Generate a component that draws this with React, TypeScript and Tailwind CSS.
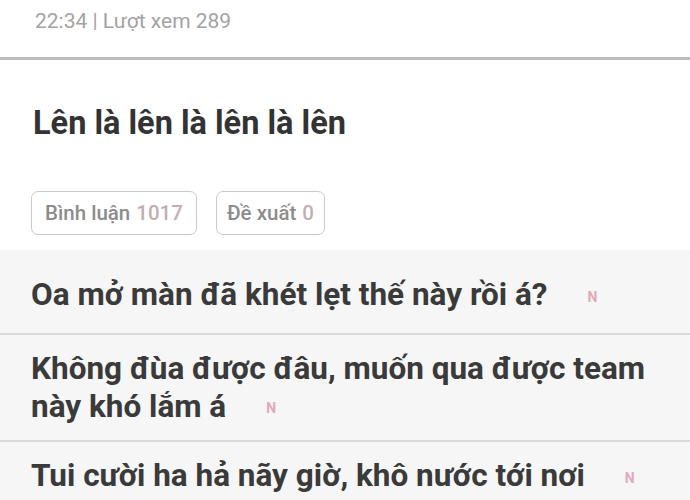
import React from 'react';

const comments = [
  { id: 1, text: 'Oa mở màn đã khét lẹt thế này rồi á?' },
  { id: 2, text: 'Không đùa được đâu, muốn qua được team này khó lắm á' },
  { id: 3, text: 'Tui cười ha hả nãy giờ, khô nước tới nơi' },
];

export default function App() {
  return (
    <div className="w-[690px] h-[500px] overflow-hidden bg-white font-['Roboto','Noto_Sans',sans-serif]">
      {/* Post meta */}
      <div className="h-[57px] px-[35px] pt-[8px] text-[21px] leading-[26px] text-[#a3a3a3]">
        22:34 | Lượt xem 289
      </div>
      <div className="h-[3px] bg-[#bdbdbd]" />

      {/* Title */}
      <div className="px-[33px] pt-[44px]">
        <h1 className="text-[32.5px] leading-[38px] font-bold text-[#333333]">Lên là lên là lên là lên</h1>
      </div>

      {/* Tabs */}
      <div className="flex gap-[19px] px-[31px] pt-[49px] pb-[15px]">
        <div className="h-[44px] px-[13px] flex items-center rounded-[7px] border border-[#c9c9c9] text-[20.5px] font-medium text-[#8c8c8c]">
          Bình luận <span className="ml-[6px] text-[#c3adb2]">1017</span>
        </div>
        <div className="h-[44px] px-[10px] flex items-center rounded-[7px] border border-[#c9c9c9] text-[20.5px] font-medium text-[#8c8c8c]">
          Đề xuất <span className="ml-[6px] text-[#c3adb2]">0</span>
        </div>
      </div>

      {/* Comment list */}
      <div className="bg-[#f6f6f6]">
        {comments.map((c) => (
          <div
            key={c.id}
            className="border-b-2 border-[#d9d9d9] pl-[31px] pr-[30px] pt-[15px] pb-[13px] first:pt-[26px] first:pb-[17px]"
          >
            <p className="font-bold text-[31.5px] leading-[38px] text-[#3a3a3a]">
              {c.text}
              <span className="ml-[40px] align-middle text-[14px] font-bold text-[#e4a9b6]">N</span>
            </p>
          </div>
        ))}
      </div>
    </div>
  );
}
